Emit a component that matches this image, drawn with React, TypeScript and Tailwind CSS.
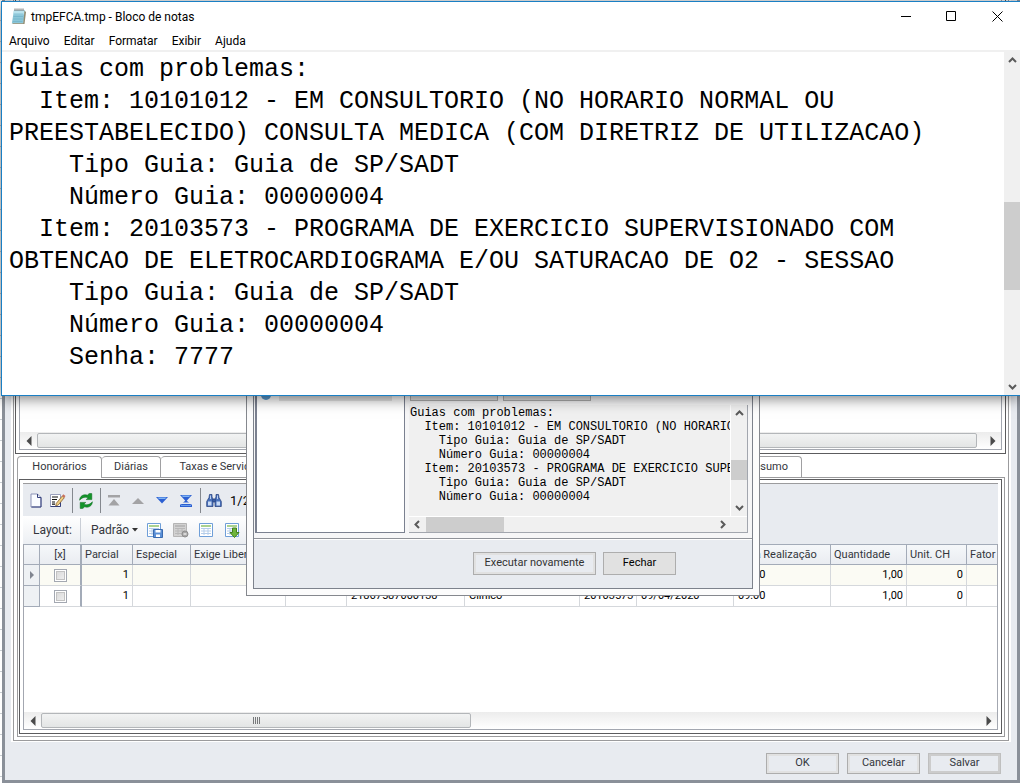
import type { ReactNode } from "react";

const report = `Guias com problemas:
  Item: 10101012 - EM CONSULTORIO (NO HORARIO NORMAL OU PREESTABELECIDO) CONSULTA MEDICA (COM DIRETRIZ DE UTILIZACAO)
    Tipo Guia: Guia de SP/SADT
    Número Guia: 00000004
  Item: 20103573 - PROGRAMA DE EXERCICIO SUPERVISIONADO COM OBTENCAO DE ELETROCARDIOGRAMA E/OU SATURACAO DE O2 - SESSAO
    Tipo Guia: Guia de SP/SADT
    Número Guia: 00000004`;

type Direction = "up" | "down" | "left" | "right";

const chevrons: Record<Direction, string> = {
  up: "M1 6 4.5 2.5 8 6",
  down: "M1 3 4.5 6.5 8 3",
  left: "M6 1 2.5 4.5 6 8",
  right: "M3 1 6.5 4.5 3 8",
};

function Chevron({ dir }: { dir: Direction }) {
  return (
    <svg width="9" height="9" viewBox="0 0 9 9" fill="none" stroke="#5a5a5a" strokeWidth="2" aria-hidden="true">
      <path d={chevrons[dir]} />
    </svg>
  );
}

function ScrollArrow({ dir, className }: { dir: Direction; className: string }) {
  return (
    <button type="button" aria-label={dir} className={`flex shrink-0 items-center justify-center ${className}`}>
      <Chevron dir={dir} />
    </button>
  );
}

function Triangle({ dir }: { dir: "left" | "right" }) {
  return (
    <svg width="6" height="10" viewBox="0 0 6 10" aria-hidden="true">
      <path d={dir === "left" ? "M5.5 0v10L0.5 5z" : "M0.5 0v10L5.5 5z"} fill="#4a4a4a" />
    </svg>
  );
}

function GridScrollbar({ children }: { children: ReactNode }) {
  return (
    <div className="flex h-[17px] items-center bg-linear-to-b from-[#ececec] to-white">
      <button type="button" aria-label="left" className="flex w-[17px] shrink-0 justify-center">
        <Triangle dir="left" />
      </button>
      {children}
      <button type="button" aria-label="right" className="ml-auto flex w-[17px] shrink-0 justify-center">
        <Triangle dir="right" />
      </button>
    </div>
  );
}

const thumb = "h-[15px] rounded-[2px] border border-[#b3b6b9] bg-linear-to-b from-[#f2f3f3] to-[#e3e5e5]";

function Notepad() {
  return (
    <section className="absolute top-px right-0 left-px border border-r-0 border-[#1a7fc4] bg-white shadow-[0_2px_14px_rgba(0,0,0,0.55)]">
      <header className="flex h-[29px] items-center pl-[9px] font-[Roboto,sans-serif] text-[12px] text-black">
        <svg width="16" height="17" viewBox="0 0 16 17" aria-hidden="true">
          <path d="M3 2h11l-1.500 13.500H0.800z" fill="#8cc6d8" />
          <path d="M3 2h11l-.5 4.500H2.500z" fill="#b9e3ee" />
          <path d="M13.500 2.500 15 4l-1.500 12H2l-.8-.8h11z" fill="#8f8a70" />
          <path d="M2.800 6h9.500M2.500 8.500h9.500M2.200 11h9.500M1.800 13.500h9.500" stroke="#6fb2c8" strokeWidth=".7" />
          <path d="M4 .5v2.500M6 .5v2.500M8 .5v2.500M10 .5v2.500M12 .5v2.500" stroke="#6d6d6d" strokeWidth="1" />
        </svg>
        <h1 className="ml-1">tmpEFCA.tmp - Bloco de notas</h1>
        <div className="ml-auto flex">
          <button type="button" aria-label="Minimizar" className="flex w-[45px] justify-center">
            <svg width="11" height="11" viewBox="0 0 11 11" stroke="#000"><path d="M0 5.500h10" /></svg>
          </button>
          <button type="button" aria-label="Maximizar" className="flex w-[45px] justify-center">
            <svg width="11" height="11" viewBox="0 0 11 11" stroke="#000" fill="none"><path d="M.5.5h9v9h-9z" /></svg>
          </button>
          <button type="button" aria-label="Fechar" className="flex w-[46px] justify-center">
            <svg width="11" height="11" viewBox="0 0 11 11" stroke="#000"><path d="m.5.5 10 10M10.500.5l-10 10" /></svg>
          </button>
        </div>
      </header>
      <nav className="flex h-[21px] items-center gap-[14px] border-b-2 border-[#f0f0f0] pt-px pl-[7px] font-[Roboto,sans-serif] text-[12px] text-black">
        {["Arquivo", "Editar", "Formatar", "Exibir", "Ajuda"].map((item) => (
          <button type="button" key={item}>{item}</button>
        ))}
      </nav>
      <div className="flex">
        <textarea
          aria-label="Texto"
          readOnly
          value={`${report}\n    Senha: 7777`}
          className="block h-[343px] min-w-0 flex-1 resize-none overflow-hidden bg-white pt-0.5 pl-[7px] font-['Liberation_Mono',monospace] text-[25px] leading-[32px] text-black outline-none"
        />
        <div className="flex w-4 flex-col bg-[#f0f0f0]">
          <ScrollArrow dir="up" className="h-[17px]" />
          <div className="flex-[133]" />
          <div className="h-[88px] bg-[#cdcdcd]" />
          <div className="flex-[88]" />
          <ScrollArrow dir="down" className="h-[17px]" />
        </div>
      </div>
    </section>
  );
}

function ReportDialog() {
  return (
    <section className="absolute top-80 left-[246px] flex h-[276px] w-[514px] flex-col border border-[#85888e] bg-[#fcfcfc] p-[6px]">
      <div className="flex min-h-0 flex-1 flex-col border border-[#7d828c] bg-[#f8f8f8]">
        <div className="flex min-h-0 flex-1 bg-[#f6f6f7] pr-1 pb-[5px] pl-px">
          <div className="flex w-[150px] flex-col border border-l-2 border-[#7b8190] bg-white px-1 pt-[60px]">
            <div className="flex items-center gap-2 pr-2">
              <span className="size-[10px] rounded-full bg-[#5b9bd0]" />
              <span className="h-3 flex-1 bg-[#e6e6e6]" />
            </div>
          </div>
          <div className="flex min-w-0 flex-1 flex-col pl-1">
            <div className="flex flex-1 items-end gap-[5px] pb-1 pl-px text-[11px] text-black">
              <button type="button" aria-label="Salvar relatório" className="h-[22px] w-[88px] border border-[#adadad] bg-[#e1e1e1]" />
              <button type="button" aria-label="Abrir relatório" className="h-[22px] w-[88px] border border-[#adadad] bg-[#e1e1e1]" />
            </div>
            <div className="flex h-[128px] flex-col border-r border-b border-[#a2a6ae] bg-[#f0f0f0]">
              <div className="flex min-h-0 flex-1 border-b border-white">
                <pre className="min-w-0 flex-1 overflow-hidden border-r border-white pt-px pl-px font-['Liberation_Mono',monospace] text-[12px] leading-[14px] text-black">
                  {report}
                </pre>
                <div className="flex w-4 flex-col">
                  <ScrollArrow dir="up" className="h-[17px]" />
                  <div className="flex-[37]" />
                  <div className="h-5 bg-[#cdcdcd]" />
                  <div className="flex-[19]" />
                  <ScrollArrow dir="down" className="h-[17px]" />
                </div>
              </div>
              <div className="flex h-[15px] pr-4">
                <ScrollArrow dir="left" className="w-[17px]" />
                <div className="w-[78px] bg-[#cdcdcd]" />
                <div className="flex-1" />
                <ScrollArrow dir="right" className="w-[17px]" />
              </div>
            </div>
          </div>
        </div>
        <footer className="flex h-[50px] items-center justify-end gap-[7px] border-t border-[#8f9298] bg-[#e8ebf0] pr-[76px] text-[11px] shadow-[inset_0_1px_0_#ffffff]">
          <button type="button" className="h-[23px] w-[123px] border border-[#adadad] bg-[#e8ebf0] text-[#333333] shadow-[inset_0_0_0_2px_#e1e1e1]">
            Executar novamente
          </button>
          <button type="button" className="h-[23px] w-[73px] border border-[#adadad] bg-[#e1e1e1] text-black">Fechar</button>
        </footer>
      </div>
    </section>
  );
}

function ToolButton({ label, children }: { label: string; children: ReactNode }) {
  return (
    <button type="button" aria-label={label} className="flex w-6 shrink-0 items-center justify-center first:w-5">
      {children}
    </button>
  );
}

function Separator() {
  return <span className="mr-px ml-0.5 h-[25px] w-px bg-[#84888e]" />;
}

function Toolbar() {
  return (
    <div className="flex h-[31px] items-center bg-[#e8ebf0] pl-[3px]">
      <ToolButton label="Novo">
        <svg width="12" height="15" viewBox="0 0 12 15"><path d="M1 1h6.500L11 4.500V14H1z" fill="#fafcff" stroke="#8c93b8" /><path d="M7.500 1v3.500H11M11 4.500V14H1.500" fill="none" stroke="#34407c" /></svg>
      </ToolButton>
      <ToolButton label="Alterar">
        <svg width="16" height="15" viewBox="0 0 16 15">
          <path d="M.5 1.500h10v12H.5z" fill="#fff" stroke="#9aa0bd" />
          <path d="M10.500 8v5.500H.5" fill="none" stroke="#34407c" />
          <path d="M2 4h6M2 6.500h5M2 9h3M2 11.200h3" stroke="#111" strokeWidth="1.200" />
          <path d="m6.300 10.300 6-7.300 2 1.700-6 7.300-2.600 1z" fill="#f0cf80" stroke="#76502a" strokeWidth=".7" />
          <path d="m12 3 1.300-1.700 2.200 1.700-1.300 1.800z" fill="#c9705c" />
        </svg>
      </ToolButton>
      <Separator />
      <ToolButton label="Atualizar">
        <svg width="14" height="16" viewBox="0 0 14 16" fill="#14952a" stroke="#07671a" strokeWidth=".5">
          <path d="M.6 7.200C.8 3 4.500.8 8.300 2.200L10.300.4l2.500.2v6H7.200l2-1.900C6.500 3.600 3.300 4.300.6 7.200z" />
          <path d="M13.400 8.800c-.2 4.200-3.900 6.400-7.700 5l-2 1.800-2.500-.2v-6h5.600l-2 1.900c2.700 1.100 5.900.4 8.600-2.500z" />
        </svg>
      </ToolButton>
      <Separator />
      <ToolButton label="Primeiro">
        <svg width="12" height="12" viewBox="0 0 12 12" fill="#a3a3a5"><path d="M0 0h12v2.500H0zM6 4l5.500 6.500H.5z" /></svg>
      </ToolButton>
      <ToolButton label="Anterior">
        <svg width="12" height="8" viewBox="0 0 12 8" fill="#a3a3a5"><path d="m6 1 6 6H0z" /></svg>
      </ToolButton>
      <ToolButton label="Próximo">
        <svg width="12" height="12" viewBox="0 0 12 12"><path d="M0 2h12L6 8.500z" fill="#2c5fd2" /><path d="M1.500 2.500h9L9 4H3z" fill="#7fb4f2" /></svg>
      </ToolButton>
      <ToolButton label="Último">
        <svg width="12" height="12" viewBox="0 0 12 12"><path d="M0 0h12L6 6.500zM6 5l5 4.500h1V12H0V9.500h1z" fill="#2c5fd2" /><path d="M1.500.5h9L9 2H3zM1 10h10v.8H1z" fill="#7fb4f2" /><path d="M1 7.500h10v1.500H1z" fill="#e8ebf0" /></svg>
      </ToolButton>
      <Separator />
      <ToolButton label="Localizar">
        <svg width="16" height="15" viewBox="0 0 16 15" fill="#4a72bb" stroke="#203a78" strokeWidth=".7">
          <path d="M3.500 1.500h2.500v2.500l1 2v7.500H.7V8.500L3 4.500zM10 1.500h2.500l.5 3 2.300 4v5H9V6l1-2z" />
          <path d="M7 6h2v3H7z" />
          <path d="M2 8.500h3.500v4H2zM10.500 8.500H14v4h-3.500z" fill="#c9dbf6" stroke="none" />
          <path d="M4 2.500h1V6H4zM11 2.500h1V6h-1z" fill="#bcd0f0" stroke="none" />
        </svg>
      </ToolButton>
      <span className="ml-1 text-[13px] text-black">1/2</span>
    </div>
  );
}

function SheetIcon({ muted, children }: { muted?: boolean; children?: ReactNode }) {
  const frame = muted ? "#b5b5b5" : "#6f9fd8";
  const fill = muted ? "#d2d2d2" : "#ffffff";
  const line = muted ? "#b8b8b8" : "#b4cdea";
  return (
    <svg width="16" height="16" viewBox="0 0 16 16">
      <path d="M.5 1.500h13v13H.5z" fill={fill} stroke={frame} />
      <path d="M2 4h10" stroke={muted ? "#b0b0b0" : "#8ec36b"} strokeWidth="1.500" />
      <path d="M2 6.500h10M2 9h10M2 11.500h10M5 6v7M9 6v7" stroke={line} />
      {children}
    </svg>
  );
}

function LayoutBar() {
  return (
    <div className="flex h-[28px] w-[420px] items-center bg-linear-to-b from-white to-[#eceff3] pl-[10px] text-[12px] text-[#33363c]">
      <span className="w-[47px]">Layout:</span>
      <span className="h-6 w-px bg-[#c9ced6]" />
      <button type="button" className="ml-[10px] flex w-[51px] items-center gap-[3px]">
        Padrão
        <svg width="6" height="4" viewBox="0 0 6 4" className="shrink-0"><path d="M0 0h6L3 3.500z" fill="#333" /></svg>
      </button>
      {["Salvar layout", "Excluir layout", "Colunas", "Exportar"].map((label) => (
        <button type="button" key={label} aria-label={label} className="flex w-[26px] shrink-0 justify-center">
          {label === "Salvar layout" && (
            <SheetIcon><path d="M6.500 7.500h9v8h-9z" fill="#5b90d6" stroke="#3a6bb0" /><path d="M8.500 8h5v2.500h-5zM9 12.500h4V15H9z" fill="#fff" /></SheetIcon>
          )}
          {label === "Excluir layout" && (
            <SheetIcon muted><circle cx="12" cy="12" r="3" fill="#a8a8a8" stroke="#8e8e8e" /><path d="M10.500 12h3" stroke="#e8e8e8" strokeWidth="1.500" /></SheetIcon>
          )}
          {label === "Colunas" && <SheetIcon />}
          {label === "Exportar" && (
            <SheetIcon><path d="M7.500 6h4v4.500H14l-4.500 5-4.500-5h2.500z" fill="#6fb53c" stroke="#40801d" /></SheetIcon>
          )}
        </button>
      ))}
    </div>
  );
}

const columns = [
  { title: "Parcial", width: "w-[51px]" },
  { title: "Especial", width: "w-[58px]" },
  { title: "Exige Liberação", width: "w-[95px]" },
  { title: "", width: "w-[61px]" },
  { title: "", width: "w-[118px]" },
  { title: "", width: "w-[115px]" },
  { title: "", width: "w-[57px]" },
  { title: "", width: "w-[97px]" },
  { title: "Hora Realização", width: "w-[97px]" },
  { title: "Quantidade", width: "w-[76px]" },
  { title: "Unit. CH", width: "w-[60px]" },
  { title: "Fator", width: "w-auto" },
];

const rows = [
  ["1", "", "", "", "21867587000138", "Clínico", "10101012", "09/04/2020", "09:00", "1,00", "0", ""],
  ["1", "", "", "", "21867587000138", "Clínico", "20103573", "09/04/2020", "09:00", "1,00", "0", ""],
];

const rightAligned = [0, 9, 10];

function ProcedureTable() {
  return (
    <table className="w-full table-fixed border-separate border-spacing-0 text-[11px] leading-4">
      <thead>
        <tr className="h-[21px] bg-linear-to-b from-[#f6f8fa] to-[#e9ecf1] text-left text-[#33363c]">
          <th className="w-4 border-t border-r border-b border-[#a3abb8]" />
          <th className="w-[42px] border-t border-r-2 border-b border-[#a3abb8] text-center font-normal">[x]</th>
          {columns.map((c, i) => (
            <th key={i} className={`${c.width} overflow-hidden border-t border-r border-b border-[#a3abb8] pl-[3px] font-normal whitespace-nowrap last:border-r-0`}>
              {c.title}
            </th>
          ))}
        </tr>
      </thead>
      <tbody>
        {rows.map((row, r) => (
          <tr key={r} className="h-[21px] text-black odd:bg-[#fbfbf4]">
            <td className="border-r border-b border-[#a3abb8] bg-[#eef1f4]">
              {r === 0 && (
                <svg width="4" height="8" viewBox="0 0 4 8" className="mx-auto"><path d="M0 0v8l4-4z" fill="#808590" /></svg>
              )}
            </td>
            <td className="border-r-2 border-b border-r-[#a3abb8] border-b-[#d5d8dc]">
              <input
                type="checkbox"
                aria-label={`Selecionar linha ${r + 1}`}
                className="mx-auto block size-[13px] appearance-none border border-[#a3a8b1] bg-linear-to-br from-[#d5d5d5] to-[#f3f3f3] shadow-[inset_0_0_0_1px_#ffffff,inset_0_0_0_2px_#c2c2c2]"
              />
            </td>
            {row.map((value, i) => (
              <td key={i} className={`border-r border-b border-[#d5d8dc] pr-[3px] pl-1 last:border-r-0 ${rightAligned.includes(i) ? "text-right" : ""}`}>
                {value}
              </td>
            ))}
          </tr>
        ))}
      </tbody>
    </table>
  );
}

const tab = "h-[21px] border-t border-r border-[#a0a0a2] rounded-t-[4px] bg-white text-[11px] text-[#33363c]";

function Tabs() {
  return (
    <div role="tablist" className="mt-0.5 mr-[3px] ml-[3px] flex">
      <button type="button" role="tab" aria-selected="true" className={`${tab} relative z-10 -mb-px h-[22px] w-[85px] border-l`}>Honorários</button>
      <button type="button" role="tab" aria-selected="false" className={`${tab} w-[59px]`}>Diárias</button>
      <button type="button" role="tab" aria-selected="false" className={`${tab} w-[120px]`}>Taxas e Serviços</button>
      <button type="button" role="tab" aria-selected="false" className={`${tab} w-[521px] pr-[13px] text-right`}>Resumo</button>
    </div>
  );
}

const actionButton = "h-[21px] w-[73px] border text-[11px] text-[#33363c]";

export default function App() {
  return (
    <main className="relative flex min-h-screen flex-col overflow-hidden bg-[repeating-linear-gradient(to_bottom,#ffffff_0px,#ffffff_20px,#c9ced2_20px,#c9ced2_21px)] pl-0.5 font-[Roboto,sans-serif]">
      <div className="flex flex-1 flex-col border-x-[3px] border-b-[3px] border-[#8a9099] bg-[#e8ebf0] px-[6px] mb-px">
        <div className="flex flex-1 flex-col bg-white px-0.5 pb-px">
          <div className="flex flex-1 flex-col border-x border-b border-[#9b9b9d]">
            <div className="mr-0.5 ml-px flex h-[454px] flex-col border-x border-b border-[#5c5c5e] p-[3px] pt-0">
              <div className="flex flex-1 flex-col justify-end border-x border-b border-[#a3a7b0]">
                <GridScrollbar>
                  <div className={`${thumb} mr-[7px] flex-1`} />
                </GridScrollbar>
              </div>
            </div>
            <Tabs />
            <div className="mx-[3px] mb-[3px] flex flex-1 flex-col border border-[#9b9b9d] pt-px pr-0.5 pb-0.5 pl-px">
              <div className="flex flex-1 flex-col border border-[#5c5c5e] p-[3px]">
                <div className="border-t border-[#9b9b9d] bg-[#e8ebf0] pt-px">
                  <Toolbar />
                  <LayoutBar />
                </div>
                <div className="flex flex-1 flex-col border-x border-b border-[#a3a7b0]">
                  <ProcedureTable />
                  <div className="mt-auto">
                    <GridScrollbar>
                      <div className={`${thumb} flex w-[430px] items-center justify-center gap-px`}>
                        {[0, 1, 2, 3].map((n) => (
                          <span key={n} className="h-[7px] w-px bg-[#77797b]" />
                        ))}
                      </div>
                    </GridScrollbar>
                  </div>
                </div>
              </div>
            </div>
          </div>
        </div>
        <footer className="flex h-[38px] items-center justify-end gap-2 pt-1 pr-[10px]">
          <button type="button" className={`${actionButton} border-[#adadad] shadow-[inset_0_0_0_2px_#e1e1e1]`}>OK</button>
          <button type="button" className={`${actionButton} border-[#adadad] shadow-[inset_0_0_0_2px_#e1e1e1]`}>Cancelar</button>
          <button type="button" className={`${actionButton} border-[#bfbfbf] text-[#3d4663] shadow-[inset_0_0_0_2px_#cccccc]`}>Salvar</button>
        </footer>
      </div>
      <ReportDialog />
      <Notepad />
    </main>
  );
}
